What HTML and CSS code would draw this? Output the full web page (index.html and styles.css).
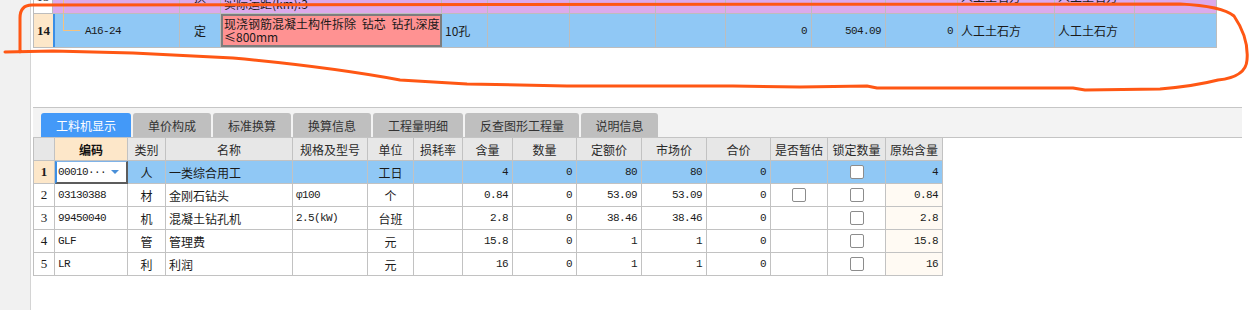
FILE: index.html
```html
<!DOCTYPE html>
<html lang="zh">
<head>
<meta charset="utf-8">
<title>工料机显示</title>
<link rel="stylesheet" href="styles.css">
</head>
<body>
<div class="app">
  <div class="side"></div>
  <div class="main">
    <div class="top">
      <div class="clip">
        <div class="trow r13">
          <div class="c num plain">13</div>
          <div class="c bar13"></div>
          <div class="c code"><span class="tree full"></span><span class="m">* 2</span></div>
          <div class="c ctr">换</div>
          <div class="c name13">装载机装车 自卸汽车运土方<br>实际运距(km):3</div>
          <div class="c"><span class="m">1000m3</span></div>
          <div class="c"></div>
          <div class="c"></div>
          <div class="c"></div>
          <div class="c r"><span class="m">1</span></div>
          <div class="c r"><span class="m">5597.12</span></div>
          <div class="c r"><span class="m">0</span></div>
          <div class="c">人工土石方</div>
          <div class="c">人工土石方</div>
          <div class="c"></div>
        </div>
      </div>
      <div class="trow r14">
        <div class="c num">14</div>
        <div class="c bar"></div>
        <div class="c code"><span class="tree half"></span><span class="branch"></span><span class="m">A16-24</span></div>
        <div class="c ctr">定</div>
        <div class="c name">现浇钢筋混凝土构件拆除 钻芯 钻孔深度<br>≤800mm</div>
        <div class="c">10孔</div>
        <div class="c"></div>
        <div class="c"></div>
        <div class="c"></div>
        <div class="c r"><span class="m">0</span></div>
        <div class="c r"><span class="m">504.09</span></div>
        <div class="c r"><span class="m">0</span></div>
        <div class="c">人工土石方</div>
        <div class="c">人工土石方</div>
        <div class="c"></div>
      </div>
    </div>
    <div class="bottom">
      <div class="tabs">
        <div class="tab active w90">工料机显示</div>
        <div class="tab w78">单价构成</div>
        <div class="tab w78">标准换算</div>
        <div class="tab w78">换算信息</div>
        <div class="tab w90">工程量明细</div>
        <div class="tab w114">反查图形工程量</div>
        <div class="tab w77">说明信息</div>
      </div>
      <div class="grid">
        <div class="gr head">
          <div class="g"></div>
          <div class="g key">编码</div>
          <div class="g">类别</div>
          <div class="g">名称</div>
          <div class="g">规格及型号</div>
          <div class="g">单位</div>
          <div class="g">损耗率</div>
          <div class="g">含量</div>
          <div class="g">数量</div>
          <div class="g">定额价</div>
          <div class="g">市场价</div>
          <div class="g">合价</div>
          <div class="g">是否暂估</div>
          <div class="g">锁定数量</div>
          <div class="g">原始含量</div>
        </div>
        <div class="gr sel">
          <div class="g rn cur">1</div>
          <div class="g edit"><span class="m">00010···</span><span class="drop"></span></div>
          <div class="g ctr">人</div>
          <div class="g">一类综合用工</div>
          <div class="g"></div>
          <div class="g ctr">工日</div>
          <div class="g"></div>
          <div class="g r"><span class="m">4</span></div>
          <div class="g r"><span class="m">0</span></div>
          <div class="g r"><span class="m">80</span></div>
          <div class="g r"><span class="m">80</span></div>
          <div class="g r"><span class="m">0</span></div>
          <div class="g"></div>
          <div class="g ctr"><span class="cb"></span></div>
          <div class="g r"><span class="m">4</span></div>
        </div>
        <div class="gr">
          <div class="g rn">2</div>
          <div class="g"><span class="m">03130388</span></div>
          <div class="g ctr">材</div>
          <div class="g">金刚石钻头</div>
          <div class="g"><span class="m">φ100</span></div>
          <div class="g ctr">个</div>
          <div class="g"></div>
          <div class="g r"><span class="m">0.84</span></div>
          <div class="g r"><span class="m">0</span></div>
          <div class="g r"><span class="m">53.09</span></div>
          <div class="g r"><span class="m">53.09</span></div>
          <div class="g r"><span class="m">0</span></div>
          <div class="g ctr"><span class="cb"></span></div>
          <div class="g ctr"><span class="cb"></span></div>
          <div class="g r orig"><span class="m">0.84</span></div>
        </div>
        <div class="gr">
          <div class="g rn">3</div>
          <div class="g"><span class="m">99450040</span></div>
          <div class="g ctr">机</div>
          <div class="g">混凝土钻孔机</div>
          <div class="g"><span class="m">2.5(kW)</span></div>
          <div class="g ctr">台班</div>
          <div class="g"></div>
          <div class="g r"><span class="m">2.8</span></div>
          <div class="g r"><span class="m">0</span></div>
          <div class="g r"><span class="m">38.46</span></div>
          <div class="g r"><span class="m">38.46</span></div>
          <div class="g r"><span class="m">0</span></div>
          <div class="g"></div>
          <div class="g ctr"><span class="cb"></span></div>
          <div class="g r orig"><span class="m">2.8</span></div>
        </div>
        <div class="gr">
          <div class="g rn">4</div>
          <div class="g"><span class="m">GLF</span></div>
          <div class="g ctr">管</div>
          <div class="g">管理费</div>
          <div class="g"></div>
          <div class="g ctr">元</div>
          <div class="g"></div>
          <div class="g r"><span class="m">15.8</span></div>
          <div class="g r"><span class="m">0</span></div>
          <div class="g r"><span class="m">1</span></div>
          <div class="g r"><span class="m">1</span></div>
          <div class="g r"><span class="m">0</span></div>
          <div class="g"></div>
          <div class="g ctr"><span class="cb"></span></div>
          <div class="g r orig"><span class="m">15.8</span></div>
        </div>
        <div class="gr">
          <div class="g rn">5</div>
          <div class="g"><span class="m">LR</span></div>
          <div class="g ctr">利</div>
          <div class="g">利润</div>
          <div class="g"></div>
          <div class="g ctr">元</div>
          <div class="g"></div>
          <div class="g r"><span class="m">16</span></div>
          <div class="g r"><span class="m">0</span></div>
          <div class="g r"><span class="m">1</span></div>
          <div class="g r"><span class="m">1</span></div>
          <div class="g r"><span class="m">0</span></div>
          <div class="g"></div>
          <div class="g ctr"><span class="cb"></span></div>
          <div class="g r orig"><span class="m">16</span></div>
        </div>
      </div>
    </div>
  </div>
</div>
<svg class="mark" width="1252" height="310" viewBox="0 0 1252 310">
  <path d="M20 52 L20 18 Q20 5 32 5 L1180 4 Q1222 6 1234 16 Q1249 38 1247 60 Q1246 77 1218 80 Q1195 86 1160 89 L1085 90 L1073 88 L877 88 L867 86 L800 87 L733 86 L567 86 L467 84 L400 80 Q330 67 233 58 L133 53 L53 51 L5 52" />
</svg>
</body>
</html>
```

FILE: styles.css
```css
* { box-sizing: border-box; margin: 0; padding: 0; }

body {
  width: 1252px;
  height: 310px;
  overflow: hidden;
  background: #fff;
  font-family: "Noto Sans CJK SC", "Noto Sans", sans-serif;
  font-size: 12px;
  color: #1a1a1a;
  position: relative;
}

.app { display: flex; height: 310px; }

.side {
  flex: none;
  width: 31px;
  background: #f1f1f1;
  border-right: 1px solid #d4d4d4;
}

.main {
  flex: 1;
  padding-left: 2px;
  display: flex;
  flex-direction: column;
}

/* ---------- top grid ---------- */
.top { height: 107px; }

.clip { height: 14px; overflow: hidden; }

.trow {
  display: grid;
  grid-template-columns: 19px 2px 125px 41px 221px 46px 82px 86px 70px 86px 74px 72px 97px 80px 82px;
  width: 1184px;
  height: 34px;
  border-left: 1px solid #bdbdbd;
  border-bottom: 1px solid #bdbdbd;
}

.r13 { margin-top: -20px; background: #dcaaeb; }
.r14 { background: #90c8f5; }

.c {
  display: flex;
  align-items: center;
  padding: 0 3px;
  border-right: 1px solid #bdbdbd;
  overflow: hidden;
  white-space: nowrap;
  position: relative;
}

.c.r { justify-content: flex-end; padding-right: 4px; }
.ctr { justify-content: center; }

.num {
  justify-content: center;
  padding: 0;
  border-right: none;
  background: #fde7c9;
  font-family: "Liberation Serif", serif;
  font-weight: bold;
  font-size: 13px;
}
.num.plain { background: #fff; font-weight: normal; border-right: 1px solid #bdbdbd; }

.bar { background: #3a8ee6; border-right: none; padding: 0; }
.bar13 { border-right: none; padding: 0; }

.code { padding-left: 30px; }

.tree {
  position: absolute;
  left: 8px;
  top: 0;
  width: 1px;
  background: #f6c27e;
}
.tree.full { height: 100%; }
.tree.half { height: 16px; }
.branch {
  position: absolute;
  left: 8px;
  top: 16px;
  width: 17px;
  height: 1px;
  background: #f6c27e;
}

.name {
  align-items: flex-start;
  background: #ff9292;
  border: 2px solid #7d7d7d;
  padding: 1px 0 0 1px;
  line-height: 13px;
  word-spacing: 3px;
  color: #1a1a1a;
}
.name13 { line-height: 13px; }

.m {
  font-family: "Liberation Mono", monospace;
  font-size: 11px;
  letter-spacing: -0.6px;
}

/* ---------- bottom ---------- */
.bottom { width: 1209px; }

.tabs {
  display: flex;
  gap: 2px;
  height: 31px;
  padding: 5px 0 0 8px;
  background: #f3f3f3;
  border-top: 1px solid #c6c6c6;
  border-bottom: 1px solid #c4c4c4;
}

.tab {
  height: 24px;
  display: flex;
  align-items: center;
  justify-content: center;
  background: #bfbfbf;
  color: #333;
  border-radius: 3px 3px 0 0;
  font-size: 12px;
}
.tab.active { background: #4399f8; color: #fff; }
.w90 { width: 90px; }
.w78 { width: 78px; }
.w77 { width: 77px; }
.w114 { width: 114px; }

.grid {
  width: 910px;
  border-left: 1px solid #c0c0c0;
}

.gr {
  display: grid;
  grid-template-columns: 21px 73px 38px 127px 75px 46px 49px 50px 64px 65px 65px 64px 57px 58px 57px;
  height: 23px;
}

.g {
  display: flex;
  align-items: center;
  padding: 0 3px;
  border-right: 1px solid #c2c2c2;
  border-bottom: 1px solid #c2c2c2;
  white-space: nowrap;
  overflow: hidden;
}
.g.r { justify-content: flex-end; padding-right: 4px; }

.head .g { background: #e7e7e7; justify-content: center; color: #2a2a2a; }
.head .key { background: #fde7c9; font-weight: bold; color: #111; }

.sel .g { background: #90c8f5; }
.sel .rn.cur { background: #fde7c9; font-weight: bold; }

.rn {
  justify-content: center;
  font-family: "Liberation Serif", serif;
  font-size: 13px;
  padding: 0;
}

.sel .edit {
  background: #fff;
  border-top: 1px solid #7fb3e8;
  border-left: 2px solid #3d8fe4;
  border-right: 2px solid #5c5c5c;
  border-bottom: 2px solid #5c5c5c;
  padding-left: 1px;
}

.drop {
  margin-left: auto;
  margin-right: 4px;
  width: 0;
  height: 0;
  border-left: 4px solid transparent;
  border-right: 4px solid transparent;
  border-top: 4px solid #4a8fd8;
}

.orig { background: #fffaf3; }

.cb {
  width: 14px;
  height: 14px;
  background: #fff;
  border: 1px solid #8c8c8c;
  border-radius: 2px;
}

/* ---------- hand-drawn annotation ---------- */
.mark {
  position: absolute;
  left: 0;
  top: 0;
  pointer-events: none;
}
.mark path {
  fill: none;
  stroke: #ff5714;
  stroke-width: 3;
  stroke-linecap: round;
  stroke-linejoin: round;
}
```
